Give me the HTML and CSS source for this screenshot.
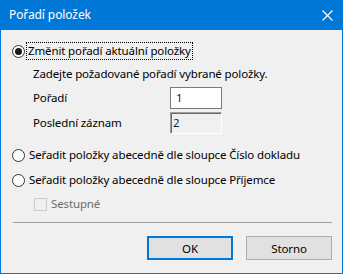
FILE: index.html
```html
<!DOCTYPE html>
<html lang="cs">
<head>
<meta charset="utf-8">
<title>Pořadí položek</title>
<link rel="stylesheet" href="styles.css">
</head>
<body>
<div class="window">
  <div class="titlebar">
    <span class="title">Pořadí položek</span>
    <svg class="close" width="11" height="11" viewBox="0 0 11 11"><path d="M0.5 0.5 L10.5 10.5 M10.5 0.5 L0.5 10.5" stroke="#fff" stroke-width="1.1" fill="none"/></svg>
  </div>
  <div class="content">
    <div class="row r1">
      <span class="radio checked"></span>
      <span class="label focus">Změnit pořadí aktuální položky</span>
    </div>
    <div class="row r2 indent">Zadejte požadované pořadí vybrané položky.</div>
    <div class="row r3 indent">
      <span class="field-label">Pořadí</span>
      <span class="input">1</span>
    </div>
    <div class="row r4 indent">
      <span class="field-label">Poslední záznam</span>
      <span class="input readonly">2</span>
    </div>
    <div class="row r5">
      <span class="radio"></span>
      <span class="label">Seřadit položky abecedně dle sloupce Číslo dokladu</span>
    </div>
    <div class="row r6">
      <span class="radio"></span>
      <span class="label">Seřadit položky abecedně dle sloupce Příjemce</span>
    </div>
    <div class="row r7 checkrow">
      <span class="checkbox"></span>
      <span class="label disabled">Sestupné</span>
    </div>
    <div class="separator"></div>
    <div class="buttons">
      <span class="button default">OK</span>
      <span class="button">Storno</span>
    </div>
  </div>
</div>
</body>
</html>
```
FILE: styles.css
```css
* { box-sizing: border-box; }
html, body { margin: 0; padding: 0; }
body {
  font-family: "Noto Sans", "Open Sans", sans-serif;
  font-size: 11.5px;
  letter-spacing: -0.13px;
  color: #000;
  background: #f0f0f0;
}
.window {
  width: 343px;
  height: 274px;
  border: 1px solid #0078d7;
  border-top: none;
  background: #f0f0f0;
  display: flex;
  flex-direction: column;
}
.titlebar {
  height: 30px;
  background: #0078d7;
  color: #fff;
  display: flex;
  align-items: center;
  justify-content: space-between;
  padding: 0 10px 0 9px;
  margin: 0 -1px;
}
.title { font-size: 12px; line-height: 16px; letter-spacing: -0.1px; }
.close { display: block; }
.content {
  display: flex;
  flex-direction: column;
  padding: 11px 10px 0 11px;
  flex: 1;
}
.row {
  display: flex;
  align-items: center;
  height: 20px;
  line-height: 16px;
  white-space: nowrap;
}
.r2 { margin-top: 3px; }
.r3 { margin-top: 3px; height: 22px; }
.r4 { margin-top: 3px; height: 22px; }
.r5 { margin-top: 11px; }
.r6 { margin-top: 5px; }
.r7 { margin-top: 4px; }
.indent { padding-left: 21px; }
.radio {
  width: 13px;
  height: 13px;
  border: 1px solid #333;
  border-radius: 50%;
  background: #fff;
  flex: none;
  margin-right: 3px;
  position: relative;
}
.radio.checked::after {
  content: "";
  position: absolute;
  left: 2px;
  top: 2px;
  width: 7px;
  height: 7px;
  border-radius: 50%;
  background: #1a1a1a;
}
.label { padding: 0 1px; }
.focus {
  outline: 1px dotted #000;
  margin-left: -1px;
}
.field-label { width: 137px; flex: none; }
.input {
  width: 52px;
  height: 22px;
  border: 1px solid #7a7a7a;
  background: #fff;
  padding-left: 5px;
  line-height: 20px;
  color: #1a1a1a;
}
.input.readonly {
  background: #f0f0f0;
  border-color: #a0a0a0 #fff #fff #a0a0a0;
  box-shadow: inset 1px 1px 0 #696969;
  padding-left: 2px;
}
.checkrow { padding-left: 22px; }
.checkbox {
  width: 13px;
  height: 13px;
  border: 1px solid #cccccc;
  background: #f0f0f0;
  margin-right: 3px;
  flex: none;
}
.disabled { color: #6d6d6d; }
.separator {
  margin-top: 8px;
  height: 1px;
  background: #a0a0a0;
  margin-left: 1px;
}
.buttons {
  display: flex;
  justify-content: flex-end;
  gap: 13px;
  margin-top: 13px;
}
.button {
  width: 86px;
  height: 24px;
  border: 1px solid #adadad;
  background: #e1e1e1;
  display: flex;
  align-items: center;
  justify-content: center;
}
.button.default { border: 2px solid #0078d7; }
```
